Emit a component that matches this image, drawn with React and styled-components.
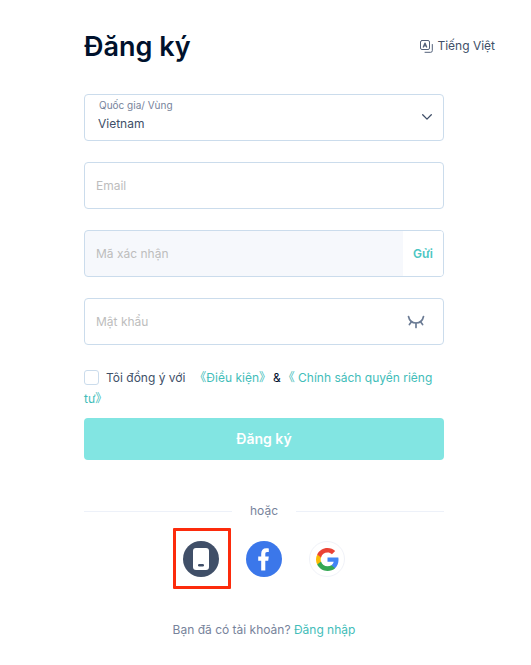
import React, { useState } from 'react';
import styled, { createGlobalStyle } from 'styled-components';

const GlobalStyle = createGlobalStyle`
  *, *::before, *::after { box-sizing: border-box; }
  body {
    margin: 0;
    background: #fff;
    color: #404f68;
    font: 12px/20px Inter, "Noto Sans CJK SC", sans-serif;
  }
  button, input, select { font: inherit; color: inherit; }
`;

const Page = styled.main`
  padding: 28px 36px 24px 84px;
`;

const Header = styled.header`
  display: flex;
  align-items: center;
  justify-content: space-between;
  margin-bottom: 28px;
`;

const Title = styled.h1`
  margin: 0;
  color: #00112c;
  font-size: 27px;
  line-height: 38px;
  font-weight: 600;
`;

const LanguageButton = styled.button`
  display: flex;
  align-items: center;
  gap: 4px;
  padding: 0 0 2px;
  border: 0;
  background: none;
  cursor: pointer;
`;

const Content = styled.div`
  max-width: 360px;
`;

const Form = styled.form`
  display: flex;
  flex-direction: column;
  gap: 21px;
`;

const Field = styled.div`
  position: relative;
  display: flex;
  height: 47px;
  border: 1px solid #cbdcec;
  border-radius: 4px;
  overflow: hidden;
  background: ${({ $filled }) => ($filled ? '#f6f8fc' : '#fff')};
`;

const FloatingLabel = styled.label`
  position: absolute;
  top: 2px;
  left: 14px;
  color: #77839b;
  font-size: 10px;
  line-height: 16px;
  pointer-events: none;
`;

const Select = styled.select`
  flex: 1;
  padding: 12px 40px 0 13px;
  border: 0;
  background: none;
  appearance: none;
  outline-offset: -2px;
`;

const SelectArrow = styled.svg`
  position: absolute;
  top: 17px;
  right: 11px;
  pointer-events: none;
`;

const Input = styled.input`
  flex: 1;
  min-width: 0;
  padding: 0 11px;
  border: 0;
  background: none;
  outline-offset: -2px;
  &::placeholder { color: #bdbdbd; opacity: 1; }
`;

const SendButton = styled.button`
  width: 40px;
  padding: 0;
  border: 0;
  background: #fff;
  color: #4bc6c2;
  font-weight: 600;
  cursor: pointer;
`;

const EyeButton = styled.button`
  display: grid;
  place-items: center;
  width: 54px;
  padding: 0;
  border: 0;
  background: none;
  cursor: pointer;
`;

const Agreement = styled.div`
  padding-top: 1px;
  line-height: 21px;
  color: #00112c;
`;

const AgreementLabel = styled.label`
  margin-right: 9px;
  color: #404f68;
`;

const Ampersand = styled.span`
  margin: 0 2px;
`;

const Checkbox = styled.input`
  appearance: none;
  width: 15px;
  height: 15px;
  margin: 0 7px 0 0;
  border: 1px solid #cbdcec;
  border-radius: 3px;
  background: #fff;
  vertical-align: -3px;
  &:checked { background: #4bc6c2; border-color: #4bc6c2; }
`;

const Link = styled.a`
  color: #42bdb9;
  text-decoration: none;
`;

const SubmitButton = styled.button`
  height: 42px;
  margin-top: -12px;
  border: 0;
  border-radius: 4px;
  background: #82e5e2;
  color: #fff;
  font-size: 14px;
  font-weight: 600;
  cursor: pointer;
`;

const Divider = styled.div`
  display: flex;
  align-items: center;
  gap: 18px;
  margin-top: 41px;
  color: #77839b;
  &::before, &::after {
    content: '';
    flex: 1;
    height: 1px;
    background: #edf1f9;
  }
`;

const SocialRow = styled.div`
  display: flex;
  justify-content: center;
  gap: 27px;
  margin-top: 20px;
`;

const SocialButton = styled.button`
  position: relative;
  display: grid;
  place-items: center;
  width: 36px;
  height: 36px;
  padding: 0;
  border: ${({ $outlined }) => ($outlined ? '1px solid #f0f2f8' : '0')};
  border-radius: 50%;
  background: ${({ $color }) => $color};
  cursor: pointer;
`;

const HighlightedButton = styled(SocialButton)`
  &::after {
    content: '';
    position: absolute;
    inset: -13px -12px -12px -10px;
    border: 3px solid #fc2b0c;
    border-radius: 1px;
  }
`;

const Footer = styled.p`
  margin: 43px 0 0;
  text-align: center;
  color: #77839b;
`;

const LanguageIcon = () => (
  <svg width="13" height="13" viewBox="0 0 13 13" fill="none" stroke="#53617a" strokeLinecap="round" strokeLinejoin="round" aria-hidden="true">
    <rect x=".5" y=".5" width="9" height="9" rx="1.5" />
    <path strokeWidth="1.2" d="M3.3 7.1 5 3l1.700 4.100M3.900 5.900h2.200" />
    <path d="M12.300 4.500v6.200q0 1.600-1.600 1.600H5" />
  </svg>
);

const ClosedEye = () => (
  <svg width="18" height="14" viewBox="0 0 18 14" fill="none" stroke="#6c7c95" strokeWidth="1.7" strokeLinecap="round" aria-hidden="true">
    <path d="M1.5 1.5C2.4 5.6 5.2 8 9 8s6.6-2.4 7.5-6.5" />
    <path d="M9 8v4.5M4.5 6.8 2.4 9.5M13.5 6.8l2.1 2.7" />
  </svg>
);

const PhoneIcon = () => (
  <svg width="36" height="36" viewBox="0 0 36 36" aria-hidden="true">
    <rect x="10" y="7" width="16" height="22" rx="3" fill="#fff" />
    <rect x="15" y="23" width="6" height="2.5" rx="1.2" fill="#404f68" />
  </svg>
);

const FacebookIcon = () => (
  <svg width="36" height="36" viewBox="0 0 36 36" aria-hidden="true">
    <path fill="#fff" d="M15.2 29.5V19.7h-3v-4.2h3v-2.7c0-3.7 1.7-5.6 5.1-5.6 1 0 1.800.1 2.5.2v3.7h-1.7c-1.400 0-1.800.7-1.800 2v2.400h3.500l-.6 4.200h-2.900v9.800z" />
  </svg>
);

const GoogleIcon = () => (
  <svg width="23" height="23" viewBox="0 0 48 48" aria-hidden="true">
    <path fill="#4285f4" d="M47 24.500c0-1.600-.2-3.200-.5-4.700H24v9h12.900c-.6 3-2.300 5.500-4.800 7.200v6h7.700C44.400 37.900 47 31.700 47 24.500z" />
    <path fill="#34a853" d="M24 48c6.500 0 11.900-2.100 15.900-5.800L32.100 36c-2.100 1.500-4.900 2.300-8.100 2.300-6.300 0-11.600-4.200-13.500-9.900h-8v6.200C6.500 42.600 14.600 48 24 48z" />
    <path fill="#fbbc05" d="M10.500 28.400c-.5-1.400-.8-2.900-.8-4.400s.3-3 .8-4.400v-6.200h-8C.9 16.600 0 20.200 0 24s.9 7.400 2.500 10.600z" />
    <path fill="#ea4335" d="M24 9.600c3.600 0 6.700 1.200 9.200 3.600l6.900-6.900C35.900 2.400 30.500 0 24 0 14.600 0 6.500 5.400 2.500 13.400l8 6.200C12.400 13.800 17.700 9.600 24 9.600z" />
  </svg>
);

export default function App() {
  const [visible, setVisible] = useState(false);
  return (
    <>
      <GlobalStyle />
      <Page>
        <Header>
          <Title>Đăng ký</Title>
          <LanguageButton type="button"><LanguageIcon />Tiếng Việt</LanguageButton>
        </Header>
        <Content>
          <Form onSubmit={(event) => event.preventDefault()}>
            <Field>
              <FloatingLabel htmlFor="country">Quốc gia/ Vùng</FloatingLabel>
              <Select id="country" defaultValue="vn">
                <option value="vn">Vietnam</option>
              </Select>
              <SelectArrow width="10" height="10" viewBox="0 0 10 10" fill="none" stroke="#404f68" strokeWidth="1.3" strokeLinecap="round" strokeLinejoin="round" aria-hidden="true">
                <path d="m.7 2.8 4.3 4.3 4.3-4.3" />
              </SelectArrow>
            </Field>
            <Field>
              <Input type="email" placeholder="Email" aria-label="Email" />
            </Field>
            <Field $filled>
              <Input placeholder="Mã xác nhận" aria-label="Mã xác nhận" />
              <SendButton type="button">Gửi</SendButton>
            </Field>
            <Field>
              <Input type={visible ? 'text' : 'password'} placeholder="Mật khẩu" aria-label="Mật khẩu" />
              <EyeButton type="button" aria-label="Hiện mật khẩu" aria-pressed={visible} onClick={() => setVisible(!visible)}>
                <ClosedEye />
              </EyeButton>
            </Field>
            <Agreement>
              <AgreementLabel htmlFor="agree"><Checkbox id="agree" type="checkbox" />Tôi đồng ý với</AgreementLabel>
              <Link href="#terms">《Điều kiện》</Link>
              <Ampersand>&amp;</Ampersand>
              <Link href="#privacy">《 Chính sách quyền riêng tư》</Link>
            </Agreement>
            <SubmitButton type="submit">Đăng ký</SubmitButton>
          </Form>
          <Divider>hoặc</Divider>
          <SocialRow>
            <HighlightedButton type="button" $color="#404f68" aria-label="Điện thoại"><PhoneIcon /></HighlightedButton>
            <SocialButton type="button" $color="#3b77ea" aria-label="Facebook"><FacebookIcon /></SocialButton>
            <SocialButton type="button" $color="#fff" $outlined aria-label="Google"><GoogleIcon /></SocialButton>
          </SocialRow>
          <Footer>Bạn đã có tài khoản? <Link href="#login">Đăng nhập</Link></Footer>
        </Content>
      </Page>
    </>
  );
}
